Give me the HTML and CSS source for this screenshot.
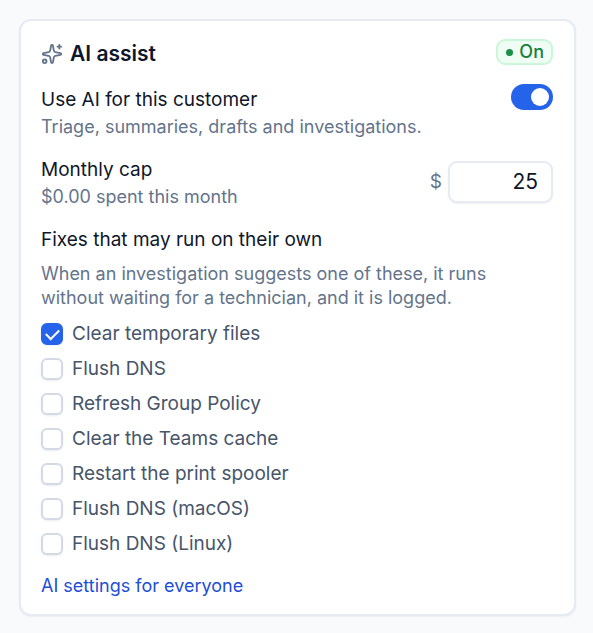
FILE: index.html
```html
<!DOCTYPE html>
<html lang="en">
<head>
<meta charset="utf-8">
<meta name="viewport" content="width=device-width, initial-scale=1">
<title>AI assist</title>
<link rel="stylesheet" href="styles.css">
</head>
<body>
<main class="card">
  <header class="card-header">
    <svg class="icon" viewBox="0 0 24 24" aria-hidden="true">
      <path d="M11.017 2.814a1 1 0 0 1 1.966 0l1.051 5.558a2 2 0 0 0 1.594 1.594l5.558 1.051a1 1 0 0 1 0 1.966l-5.558 1.051a2 2 0 0 0-1.594 1.594l-1.051 5.558a1 1 0 0 1-1.966 0l-1.051-5.558a2 2 0 0 0-1.594-1.594l-5.558-1.051a1 1 0 0 1 0-1.966l5.558-1.051a2 2 0 0 0 1.594-1.594z"/>
      <path d="M20 2v4M22 4h-4"/>
      <circle cx="4" cy="20" r="2"/>
    </svg>
    <h1 class="title">AI assist</h1>
    <span class="badge">On</span>
  </header>

  <section class="setting setting-top">
    <div class="setting-text">
      <label class="label" for="use-ai">Use AI for this customer</label>
      <p class="hint">Triage, summaries, drafts and investigations.</p>
    </div>
    <input class="switch" type="checkbox" role="switch" id="use-ai" checked>
  </section>

  <section class="setting">
    <div class="setting-text">
      <label class="label" for="cap">Monthly cap</label>
      <p class="hint">$0.00 spent this month</p>
    </div>
    <div class="money">
      <span class="currency">$</span>
      <input class="amount" type="text" inputmode="numeric" id="cap" value="25">
    </div>
  </section>

  <section class="fixes">
    <h2 class="label">Fixes that may run on their own</h2>
    <p class="hint fixes-hint">When an investigation suggests one of these, it runs without waiting for a technician, and it is logged.</p>
    <div class="options">
      <label class="option"><input class="check" type="checkbox" checked>Clear temporary files</label>
      <label class="option"><input class="check" type="checkbox">Flush DNS</label>
      <label class="option"><input class="check" type="checkbox">Refresh Group Policy</label>
      <label class="option"><input class="check" type="checkbox">Clear the Teams cache</label>
      <label class="option"><input class="check" type="checkbox">Restart the print spooler</label>
      <label class="option"><input class="check" type="checkbox">Flush DNS (macOS)</label>
      <label class="option"><input class="check" type="checkbox">Flush DNS (Linux)</label>
    </div>
  </section>

  <a class="link" href="#settings">AI settings for everyone</a>
</main>
</body>
</html>
```
FILE: styles.css
```css
* {
  box-sizing: border-box;
}

body {
  margin: 0;
  padding: 19px 17px 17px 19px;
  background: #f8fafc;
  color: #0f172a;
  font: 400 19px/26px Inter, "Liberation Sans", sans-serif;
}

h1, h2, p {
  margin: 0;
}

.card {
  padding: 18px 21px 15px 20px;
  background: #fff;
  border: 2px solid #e6eaf2;
  border-radius: 12px;
  box-shadow: 0 1px 2px rgb(15 23 42 / 5%);
}

.card-header {
  display: flex;
  align-items: flex-start;
  gap: 7px;
}

.icon {
  width: 22px;
  height: 22px;
  margin-top: 4px;
  fill: none;
  stroke: #64748b;
  stroke-width: 2;
  stroke-linecap: round;
  stroke-linejoin: round;
}

.title {
  flex: 1;
  font-size: 21px;
  font-weight: 600;
  line-height: 30px;
}

.badge {
  display: flex;
  align-items: center;
  gap: 6px;
  padding: 0 7px 0 8px;
  border: 2px solid #c9f8d9;
  border-radius: 9px;
  background: #f0fdf4;
  color: #15803d;
  font-size: 18px;
  font-weight: 500;
  line-height: 22px;
}

.badge::before {
  content: "";
  width: 7px;
  height: 7px;
  border-radius: 50%;
  background: #1a8f47;
}

.setting {
  display: flex;
  align-items: center;
  justify-content: space-between;
  margin-top: 15px;
}

.setting-top {
  align-items: flex-start;
}

.label {
  display: block;
  font-size: 19px;
  font-weight: 400;
  line-height: 31px;
}

.hint {
  color: #64748b;
  font-size: 18px;
  line-height: 24px;
}

.switch {
  appearance: none;
  display: flex;
  align-items: center;
  justify-content: flex-end;
  width: 42px;
  height: 26px;
  margin: 0;
  padding: 4px;
  border-radius: 13px;
  background: #2563eb;
}

.switch::before {
  content: "";
  width: 18px;
  height: 18px;
  border-radius: 50%;
  background: #fff;
}

.switch:not(:checked) {
  justify-content: flex-start;
  background: #cbd5e1;
}

.money {
  display: flex;
  align-items: center;
  gap: 6px;
}

.currency {
  color: #64748b;
}

.amount {
  width: 105px;
  height: 42px;
  padding: 0 13px;
  border: 2px solid #e6eaf2;
  border-radius: 9px;
  background: #fff;
  box-shadow: 0 1px 2px rgb(15 23 42 / 6%);
  color: inherit;
  font: inherit;
  font-size: 21px;
  text-align: right;
}

.fixes {
  margin-top: 15px;
}

.fixes-hint {
  max-width: 480px;
  margin-top: 7px;
}

.options {
  display: grid;
  gap: 9px;
  margin-top: 11px;
}

.option {
  display: flex;
  align-items: center;
  gap: 9px;
  color: #475569;
}

.check {
  appearance: none;
  width: 22px;
  height: 22px;
  margin: 0;
  border: 2px solid #d3dae6;
  border-radius: 6px;
  background: #fff;
  box-shadow: 0 1px 2px rgb(15 23 42 / 8%);
}

.check:checked {
  display: grid;
  place-items: center;
  border-color: #2563eb;
  background: #2563eb;
}

.check:checked::before {
  content: "";
  width: 11px;
  height: 6px;
  border: solid #fff;
  border-width: 0 0 2px 2px;
  transform: translateY(-1px) rotate(-45deg);
}

.link {
  display: inline-block;
  margin-top: 17px;
  color: #1d4ed8;
  font-size: 18px;
  line-height: 24px;
  text-decoration: none;
}
```
